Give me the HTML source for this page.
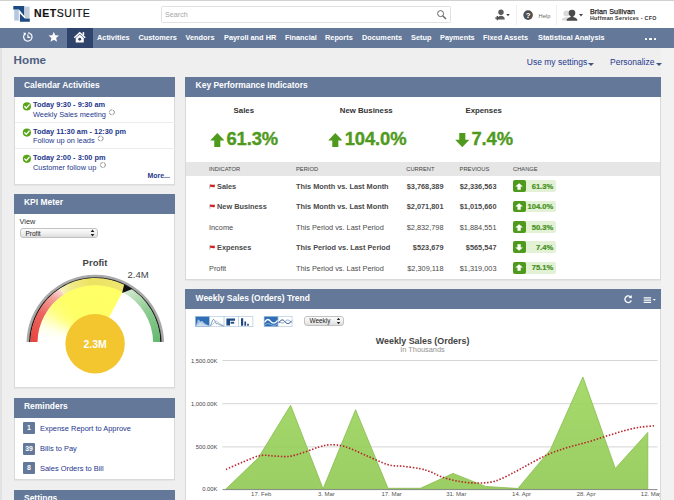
<!DOCTYPE html>
<html>
<head>
<meta charset="utf-8">
<title>Home - NetSuite</title>
<style>
*{box-sizing:border-box;margin:0;padding:0}
html,body{width:674px;height:500px;overflow:hidden}
body{background:#efefef;font-family:"Liberation Sans",Arial,sans-serif;font-size:8px;color:#333;position:relative}
.abs{position:absolute}
#top{position:absolute;left:0;top:0;width:674px;height:28px;background:#fff;border-top:1px solid #d2d2d2}
#nav{position:absolute;left:0;top:28px;width:674px;height:20px;background:#64789a}
#nav .home{position:absolute;left:67px;top:0;width:26px;height:20px;background:#2f436b}
#nav span.m{position:absolute;top:5px;color:#fff;font-weight:bold;font-size:7.35px;line-height:9px;white-space:nowrap}
#rightstrip{position:absolute;left:661px;top:48px;width:13px;height:452px;background:#f2f2f2}
#leftstrip{position:absolute;left:0;top:48px;width:1.5px;height:452px;background:#e2e2e2}
.portlet{position:absolute;background:#fff;border:1px solid #dadada;border-top:none;box-shadow:0 1px 1px rgba(0,0,0,0.04)}
.phead{position:absolute;left:-1px;top:0;right:-1px;height:19.5px;background:#64789a;color:#fff;font-weight:bold;font-size:8.45px;line-height:17.4px;padding-left:10px;white-space:nowrap}
.blue{color:#24378c}
.t{position:absolute;white-space:nowrap;line-height:10px}
.b{font-weight:bold}
.big{position:absolute;font-weight:bold;font-size:18.4px;line-height:20px;color:#4f9a1c;white-space:nowrap;letter-spacing:-0.1px;-webkit-text-stroke:0.35px #4f9a1c}
.th{position:absolute;top:165.8px;font-size:5.75px;line-height:6px;color:#444;white-space:nowrap}
.r{position:absolute;font-size:7.35px;line-height:9px;color:#4a4a4a;white-space:nowrap}
.num{text-align:right}
.chg{position:absolute;left:513px;width:42.6px;height:11.7px;background:#e3f1d6;border-radius:2px}
.chg i{position:absolute;left:0;top:0;width:13px;height:11.7px;background:#4f9a1c;border-radius:2px}
.chg b{position:absolute;right:2.4px;top:1.3px;font-size:7.6px;line-height:9px;color:#46921a;-webkit-text-stroke:0.2px #46921a}
.rem{position:absolute;left:22.8px;width:12.4px;height:12px;background:#64789a;color:#fff;font-weight:bold;font-size:6.9px;line-height:12px;text-align:center;border-radius:1px}
.reml{position:absolute;left:40px;font-size:7.45px;line-height:10px;color:#24378c;white-space:nowrap}
.sel{position:absolute;border:1px solid #c2c2c2;border-radius:3px;background:linear-gradient(#fcfcfc,#f0f0f0 50%,#dedede);font-size:6.5px;color:#222;white-space:nowrap}
</style>
</head>
<body>
<div id="top">
  <svg class="abs" style="left:13px;top:4px" width="18" height="18" viewBox="0 0 18 18">
    <rect x="1.2" y="4.6" width="4.6" height="11" fill="#b4c9e0"/>
    <rect x="12" y="1.7" width="4.6" height="11.3" fill="#c3ced9"/>
    <polygon points="0.3,1.1 11.3,1.1 11.3,11 6,4.6 0.3,4.6" fill="#1b4b82"/>
    <polygon points="6.9,8.4 11.8,13.4 16.8,13.4 16.8,16.7 6.9,16.7" fill="#1b4b82"/>
  </svg>
  <div class="t" style="left:34.4px;top:5.7px;font-size:11.5px;line-height:13px;color:#111;letter-spacing:0.6px;transform:scaleX(0.915);-webkit-text-stroke:0.2px #111;transform-origin:0 0"><b>NET</b>SUITE</div>
  <div class="abs" style="left:161px;top:4.5px;width:290px;height:17.5px;border:1px solid #e1e1e1;border-radius:1.5px;background:#fff"></div>
  <div class="t" style="left:165px;top:8.7px;font-size:7.2px;color:#a6a6a6">Search</div>
  <svg class="abs" style="left:436px;top:8px" width="12" height="12" viewBox="0 0 12 12"><circle cx="4.6" cy="4.6" r="3" fill="none" stroke="#666" stroke-width="1"/><line x1="6.9" y1="6.9" x2="10" y2="10" stroke="#666" stroke-width="1.4"/></svg>
  <div class="abs" style="left:516px;top:4px;width:1px;height:20px;background:#eeeeee"></div>
  <div class="abs" style="left:556px;top:4px;width:1px;height:20px;background:#eeeeee"></div>
  <svg class="abs" style="left:494px;top:7px" width="18" height="14" viewBox="0 0 18 14"><circle cx="7" cy="4.2" r="2.7" fill="#5a5a5a"/><path d="M3.2 11.6 C3.2 6.6 10.8 6.6 10.8 11.6 Z" fill="#5a5a5a"/><path d="M1.2 10.2 h4.2 M3.3 8.1 v4.2" stroke="#4a4a4a" stroke-width="1.3"/><path d="M12.2 6 h3.6 l-1.8 2.3z" fill="#444"/></svg>
  <svg class="abs" style="left:523.3px;top:9.2px" width="10.2" height="10.2" viewBox="0 0 11 11"><circle cx="5.5" cy="5.5" r="5.2" fill="#4f4f4f"/><text x="5.5" y="8.5" font-size="8.4" font-weight="bold" fill="#fff" text-anchor="middle" font-family="Liberation Sans, sans-serif">?</text></svg>
  <div class="t" style="left:538.6px;top:9.6px;font-size:5.7px;color:#666">Help</div>
  <svg class="abs" style="left:561px;top:7px" width="24" height="14" viewBox="0 0 24 14"><circle cx="5.4" cy="5.4" r="3" fill="#d9d9d9"/><path d="M0.6 12.6 C0.6 8.2 10 8.2 10 12.6 Z" fill="#d9d9d9"/><circle cx="11" cy="5" r="3.3" fill="#4a4a4a"/><path d="M9.6 7.4 h2.8 v2 h-2.8z" fill="#4a4a4a"/><path d="M5.6 12.7 C5.6 7.8 16.4 7.8 16.4 12.7 Z" fill="#4a4a4a"/><path d="M18 6 h4 l-2 2.4z" fill="#444"/></svg>
  <div class="t" style="left:590px;top:6.6px;font-size:7.1px;line-height:8px;color:#222;letter-spacing:0.12px;-webkit-text-stroke:0.25px #222">Brian Sullivan</div>
  <div class="t b" style="left:590px;top:14.2px;font-size:5.3px;line-height:6px;color:#333;letter-spacing:0.27px">Huffman Services - CFO</div>
</div>

<div id="nav">
  <div class="home"></div>
  <svg class="abs" style="left:21.6px;top:3.3px" width="11.8" height="11.8" viewBox="0 0 13 13"><path d="M3.2 3.2 A4.6 4.6 0 1 0 6.5 1.9" fill="none" stroke="#fff" stroke-width="1.3"/><path d="M6.5 3.6 V7 H9" fill="none" stroke="#fff" stroke-width="1.2"/><path d="M1.2 2 l3.2 0 l-0.6 3z" fill="#fff"/></svg>
  <svg class="abs" style="left:47.9px;top:3.3px" width="11.6" height="11.6" viewBox="0 0 13 13"><polygon points="6.5,0.8 8.1,4.8 12.4,5.1 9.1,7.9 10.2,12.1 6.5,9.8 2.8,12.1 3.9,7.9 0.6,5.1 4.9,4.8" fill="#fff"/></svg>
  <svg class="abs" style="left:73.1px;top:2.8px" width="13.5" height="12.5" viewBox="0 0 14 13"><path d="M7 0.8 L0.8 6.6 L1.8 7.6 L7 2.8 L12.2 7.6 L13.2 6.6 Z" fill="#fff"/><path d="M2.8 7.2 L7 3.6 L11.2 7.2 V12 H2.8 Z" fill="#fff"/><rect x="10" y="1.2" width="1.6" height="3" fill="#fff"/><circle cx="7" cy="8.6" r="1.5" fill="#2f436b"/></svg>
  <span class="m" style="left:97px">Activities</span>
  <span class="m" style="left:138.5px">Customers</span>
  <span class="m" style="left:185.5px">Vendors</span>
  <span class="m" style="left:224px">Payroll and HR</span>
  <span class="m" style="left:285px">Financial</span>
  <span class="m" style="left:325px">Reports</span>
  <span class="m" style="left:362px">Documents</span>
  <span class="m" style="left:411px">Setup</span>
  <span class="m" style="left:440px">Payments</span>
  <span class="m" style="left:483px">Fixed Assets</span>
  <span class="m" style="left:538px">Statistical Analysis</span>
  <div class="abs" style="left:644.9px;top:9.7px;width:2.3px;height:2.3px;background:#fff;border-radius:0.6px"></div>
  <div class="abs" style="left:649.4px;top:9.7px;width:2.3px;height:2.3px;background:#fff;border-radius:0.6px"></div>
  <div class="abs" style="left:653.9px;top:9.7px;width:2.3px;height:2.3px;background:#fff;border-radius:0.6px"></div>
</div>
<div id="rightstrip"></div>
<div id="leftstrip"></div>

<div class="t b" style="left:13.6px;top:51.7px;font-size:11.7px;line-height:16px;color:#4d5f80">Home</div>
<div class="t blue" style="left:526.8px;top:56.8px;font-size:8.5px;line-height:10px">Use my settings</div>
<div class="abs" style="left:588px;top:63.4px;width:0;height:0;border-left:3px solid transparent;border-right:3px solid transparent;border-top:3px solid #44557f"></div>
<div class="t blue" style="left:610px;top:56.8px;font-size:8.5px;line-height:10px">Personalize</div>
<div class="abs" style="left:655.5px;top:63.4px;width:0;height:0;border-left:3px solid transparent;border-right:3px solid transparent;border-top:3px solid #44557f"></div>

<!-- Calendar Activities -->
<div class="portlet" style="left:14px;top:77px;width:161.4px;height:107.5px">
  <div class="phead">Calendar Activities</div>
  <div class="abs" style="left:0;top:45px;width:160px;height:1px;background:#ececec"></div>
  <div class="abs" style="left:0;top:71px;width:160px;height:1px;background:#ececec"></div>
</div>
<svg class="abs" style="left:0;top:0" width="190" height="200" viewBox="0 0 190 200">
  <g id="chk"><circle cx="26.9" cy="106.4" r="4.1" fill="#58a618"/><path d="M24.7 106.5 l1.6 1.7 l2.9 -3.4" fill="none" stroke="#fff" stroke-width="1.3" stroke-linecap="round" stroke-linejoin="round"/></g>
  <g transform="translate(0,26.2)"><circle cx="26.9" cy="106.4" r="4.1" fill="#58a618"/><path d="M24.7 106.5 l1.6 1.7 l2.9 -3.4" fill="none" stroke="#fff" stroke-width="1.3" stroke-linecap="round" stroke-linejoin="round"/></g>
  <g transform="translate(0,52.4)"><circle cx="26.9" cy="106.4" r="4.1" fill="#58a618"/><path d="M24.7 106.5 l1.6 1.7 l2.9 -3.4" fill="none" stroke="#fff" stroke-width="1.3" stroke-linecap="round" stroke-linejoin="round"/></g>
  <circle cx="111.9" cy="112.3" r="2.5" fill="none" stroke="#8a8a8a" stroke-width="0.95" stroke-dasharray="3.2 0.9"/>
  <circle cx="100.6" cy="138.5" r="2.5" fill="none" stroke="#8a8a8a" stroke-width="0.95" stroke-dasharray="3.2 0.9"/>
  <circle cx="102.9" cy="165" r="2.5" fill="none" stroke="#8a8a8a" stroke-width="0.95" stroke-dasharray="3.2 0.9"/>
</svg>
<div class="t b blue" style="left:33px;top:100.2px;font-size:7.4px">Today 9:30 - 9:30 am</div>
<div class="t blue" style="left:33px;top:109.8px;font-size:7.4px">Weekly Sales meeting</div>
<div class="t b blue" style="left:33px;top:126.6px;font-size:7.4px">Today 11:30 am - 12:30 pm</div>
<div class="t blue" style="left:33px;top:136.4px;font-size:7.4px">Follow up on leads</div>
<div class="t b blue" style="left:33px;top:152.8px;font-size:7.4px">Today 2:00 - 3:00 pm</div>
<div class="t blue" style="left:33px;top:162.5px;font-size:7.4px">Customer follow up</div>
<div class="t b blue" style="left:147.5px;top:170.8px;font-size:6.95px">More...</div>


<!-- KPI Meter -->
<div class="portlet" style="left:14px;top:194px;width:161.4px;height:193.5px">
  <div class="phead">KPI Meter</div>
</div>
<div class="t" style="left:19.5px;top:217.3px;font-size:7.4px;color:#333">View</div>
<div class="sel" style="left:19.5px;top:227.5px;width:78.5px;height:10.5px;line-height:9px;padding-left:5px">Profit</div>
<svg class="abs" style="left:89.5px;top:229px" width="5" height="8" viewBox="0 0 5 8"><path d="M0.6 3 L2.5 0.6 L4.4 3Z M0.6 5 L2.5 7.4 L4.4 5Z" fill="#222"/></svg>
<svg class="abs" style="left:0;top:0" width="190" height="400" viewBox="0 0 190 400">
<defs>
<clipPath id="gc"><rect x="0" y="250" width="190" height="92"/></clipPath>
<linearGradient id="gr" gradientUnits="userSpaceOnUse" x1="32" y1="342" x2="60" y2="290"><stop offset="0" stop-color="#e8453f"/><stop offset="0.5" stop-color="#ec655f"/><stop offset="0.8" stop-color="#f29d96"/><stop offset="1" stop-color="#f9dcd4"/></linearGradient>
<linearGradient id="gy" gradientUnits="userSpaceOnUse" x1="58" y1="296" x2="125" y2="288"><stop offset="0" stop-color="#f8f4cc"/><stop offset="0.22" stop-color="#f1ea88"/><stop offset="0.5" stop-color="#ece362"/><stop offset="1" stop-color="#efe670"/></linearGradient>
<linearGradient id="gg" gradientUnits="userSpaceOnUse" x1="128" y1="290" x2="160" y2="342"><stop offset="0" stop-color="#d2e9ce"/><stop offset="0.45" stop-color="#8fcc92"/><stop offset="1" stop-color="#62b86c"/></linearGradient>
</defs>
<g clip-path="url(#gc)">
<path d="M26.50 343.60 A68.8 68.8 0 1 1 164.10 343.60 L161.30 343.58 A66 66 0 1 0 29.30 343.58 Z" fill="#a9a9a9"/>
<path d="M29.00 343.58 A66.3 66.3 0 1 1 161.60 343.58 L160.10 343.57 A64.8 64.8 0 1 0 30.50 343.57 Z" fill="#1c1c1c"/>
<path d="M95.3 343.0 L37.20 343.51 A58.099999999999994 58.099999999999994 0 0 1 37.28 339.96 Z" fill="#ffffff"/>
<path d="M95.3 343.0 L37.22 341.48 A58.099999999999994 58.099999999999994 0 0 1 37.42 337.94 Z" fill="#fffffe"/>
<path d="M95.3 343.0 L37.31 339.45 A58.099999999999994 58.099999999999994 0 0 1 37.63 335.92 Z" fill="#fffffd"/>
<path d="M95.3 343.0 L37.47 337.43 A58.099999999999994 58.099999999999994 0 0 1 37.92 333.91 Z" fill="#fffffd"/>
<path d="M95.3 343.0 L37.70 335.42 A58.099999999999994 58.099999999999994 0 0 1 38.27 331.91 Z" fill="#fffffb"/>
<path d="M95.3 343.0 L38.00 333.41 A58.099999999999994 58.099999999999994 0 0 1 38.69 329.93 Z" fill="#fffff6"/>
<path d="M95.3 343.0 L38.37 331.42 A58.099999999999994 58.099999999999994 0 0 1 39.18 327.96 Z" fill="#fffff2"/>
<path d="M95.3 343.0 L38.81 329.44 A58.099999999999994 58.099999999999994 0 0 1 39.74 326.01 Z" fill="#ffffee"/>
<path d="M95.3 343.0 L39.31 327.47 A58.099999999999994 58.099999999999994 0 0 1 40.37 324.08 Z" fill="#ffffe9"/>
<path d="M95.3 343.0 L39.89 325.53 A58.099999999999994 58.099999999999994 0 0 1 41.06 322.18 Z" fill="#ffffe1"/>
<path d="M95.3 343.0 L40.53 323.61 A58.099999999999994 58.099999999999994 0 0 1 41.82 320.30 Z" fill="#ffffd8"/>
<path d="M95.3 343.0 L41.24 321.71 A58.099999999999994 58.099999999999994 0 0 1 42.64 318.45 Z" fill="#ffffcf"/>
<path d="M95.3 343.0 L42.02 319.83 A58.099999999999994 58.099999999999994 0 0 1 43.53 316.62 Z" fill="#ffffc6"/>
<path d="M95.3 343.0 L42.86 317.99 A58.099999999999994 58.099999999999994 0 0 1 44.48 314.83 Z" fill="#ffffbb"/>
<path d="M95.3 343.0 L43.76 316.17 A58.099999999999994 58.099999999999994 0 0 1 45.50 313.08 Z" fill="#ffffb0"/>
<path d="M95.3 343.0 L44.73 314.39 A58.099999999999994 58.099999999999994 0 0 1 46.57 311.36 Z" fill="#ffffa4"/>
<path d="M95.3 343.0 L45.76 312.64 A58.099999999999994 58.099999999999994 0 0 1 47.71 309.68 Z" fill="#ffff99"/>
<path d="M95.3 343.0 L46.85 310.93 A58.099999999999994 58.099999999999994 0 0 1 48.90 308.03 Z" fill="#ffff91"/>
<path d="M95.3 343.0 L48.00 309.26 A58.099999999999994 58.099999999999994 0 0 1 50.15 306.44 Z" fill="#ffff8a"/>
<path d="M95.3 343.0 L49.21 307.63 A58.099999999999994 58.099999999999994 0 0 1 51.45 304.88 Z" fill="#ffff82"/>
<path d="M95.3 343.0 L50.47 306.04 A58.099999999999994 58.099999999999994 0 0 1 52.81 303.38 Z" fill="#ffff7b"/>
<path d="M95.3 343.0 L51.79 304.50 A58.099999999999994 58.099999999999994 0 0 1 54.22 301.92 Z" fill="#ffff75"/>
<path d="M95.3 343.0 L53.16 303.01 A58.099999999999994 58.099999999999994 0 0 1 55.68 300.51 Z" fill="#ffff73"/>
<path d="M95.3 343.0 L54.58 301.56 A58.099999999999994 58.099999999999994 0 0 1 57.18 299.15 Z" fill="#ffff70"/>
<path d="M95.3 343.0 L56.05 300.16 A58.099999999999994 58.099999999999994 0 0 1 58.74 297.85 Z" fill="#ffff6e"/>
<path d="M95.3 343.0 L57.57 298.82 A58.099999999999994 58.099999999999994 0 0 1 60.33 296.60 Z" fill="#ffff6c"/>
<path d="M95.3 343.0 L59.13 297.53 A58.099999999999994 58.099999999999994 0 0 1 61.98 295.41 Z" fill="#ffff69"/>
<path d="M95.3 343.0 L60.74 296.30 A58.099999999999994 58.099999999999994 0 0 1 63.66 294.27 Z" fill="#ffff67"/>
<path d="M95.3 343.0 L62.39 295.12 A58.099999999999994 58.099999999999994 0 0 1 65.38 293.20 Z" fill="#ffff66"/>
<path d="M95.3 343.0 L64.08 294.00 A58.099999999999994 58.099999999999994 0 0 1 67.13 292.18 Z" fill="#ffff66"/>
<path d="M95.3 343.0 L65.81 292.94 A58.099999999999994 58.099999999999994 0 0 1 68.92 291.23 Z" fill="#ffff66"/>
<path d="M95.3 343.0 L67.58 291.94 A58.099999999999994 58.099999999999994 0 0 1 70.75 290.34 Z" fill="#ffff66"/>
<path d="M95.3 343.0 L69.38 291.00 A58.099999999999994 58.099999999999994 0 0 1 72.60 289.52 Z" fill="#ffff66"/>
<path d="M95.3 343.0 L71.21 290.13 A58.099999999999994 58.099999999999994 0 0 1 74.48 288.76 Z" fill="#ffff66"/>
<path d="M95.3 343.0 L73.07 289.32 A58.099999999999994 58.099999999999994 0 0 1 76.38 288.07 Z" fill="#ffff66"/>
<path d="M95.3 343.0 L74.95 288.58 A58.099999999999994 58.099999999999994 0 0 1 78.31 287.44 Z" fill="#ffff66"/>
<path d="M95.3 343.0 L76.86 287.90 A58.099999999999994 58.099999999999994 0 0 1 80.26 286.88 Z" fill="#ffff66"/>
<path d="M95.3 343.0 L78.80 287.29 A58.099999999999994 58.099999999999994 0 0 1 82.23 286.39 Z" fill="#ffff66"/>
<path d="M95.3 343.0 L80.75 286.75 A58.099999999999994 58.099999999999994 0 0 1 84.21 285.97 Z" fill="#ffff66"/>
<path d="M95.3 343.0 L82.72 286.28 A58.099999999999994 58.099999999999994 0 0 1 86.21 285.62 Z" fill="#ffff66"/>
<path d="M95.3 343.0 L84.71 285.87 A58.099999999999994 58.099999999999994 0 0 1 88.22 285.33 Z" fill="#ffff66"/>
<path d="M95.3 343.0 L86.71 285.54 A58.099999999999994 58.099999999999994 0 0 1 90.24 285.12 Z" fill="#ffff66"/>
<path d="M95.3 343.0 L88.72 285.27 A58.099999999999994 58.099999999999994 0 0 1 92.26 284.98 Z" fill="#ffff66"/>
<path d="M95.3 343.0 L90.74 285.08 A58.099999999999994 58.099999999999994 0 0 1 94.29 284.91 Z" fill="#ffff66"/>
<path d="M95.3 343.0 L92.77 284.96 A58.099999999999994 58.099999999999994 0 0 1 96.31 284.91 Z" fill="#ffff66"/>
<path d="M95.3 343.0 L94.79 284.90 A58.099999999999994 58.099999999999994 0 0 1 98.34 284.98 Z" fill="#ffff66"/>
<path d="M95.3 343.0 L96.82 284.92 A58.099999999999994 58.099999999999994 0 0 1 100.36 285.12 Z" fill="#ffff66"/>
<path d="M95.3 343.0 L98.85 285.01 A58.099999999999994 58.099999999999994 0 0 1 102.38 285.33 Z" fill="#ffff66"/>
<path d="M95.3 343.0 L100.87 285.17 A58.099999999999994 58.099999999999994 0 0 1 104.39 285.62 Z" fill="#ffff66"/>
<path d="M95.3 343.0 L102.88 285.40 A58.099999999999994 58.099999999999994 0 0 1 106.39 285.97 Z" fill="#ffff66"/>
<path d="M95.3 343.0 L104.89 285.70 A58.099999999999994 58.099999999999994 0 0 1 108.37 286.39 Z" fill="#ffff66"/>
<path d="M95.3 343.0 L106.88 286.07 A58.099999999999994 58.099999999999994 0 0 1 110.34 286.88 Z" fill="#ffff66"/>
<path d="M95.3 343.0 L108.86 286.51 A58.099999999999994 58.099999999999994 0 0 1 112.29 287.44 Z" fill="#ffff66"/>
<path d="M95.3 343.0 L110.83 287.01 A58.099999999999994 58.099999999999994 0 0 1 114.22 288.07 Z" fill="#ffff66"/>
<path d="M95.3 343.0 L112.77 287.59 A58.099999999999994 58.099999999999994 0 0 1 116.12 288.76 Z" fill="#ffff66"/>
<path d="M95.3 343.0 L114.69 288.23 A58.099999999999994 58.099999999999994 0 0 1 118.00 289.52 Z" fill="#ffff66"/>
<path d="M95.3 343.0 L116.59 288.94 A58.099999999999994 58.099999999999994 0 0 1 119.85 290.34 Z" fill="#ffff66"/>
<path d="M95.3 343.0 L118.47 289.72 A58.099999999999994 58.099999999999994 0 0 1 121.68 291.23 Z" fill="#ffff66"/>
<path d="M95.3 343.0 L120.31 290.56 A58.099999999999994 58.099999999999994 0 0 1 122.58 291.70 Z" fill="#ffff66"/>
<path d="M95.3 343.0 L122.13 291.46 A58.099999999999994 58.099999999999994 0 0 1 122.58 291.70 Z" fill="#ffff66"/>
<path d="M30.30 343.57 A65.0 65.0 0 0 1 59.90 288.49 L63.82 294.52 A57.8 57.8 0 0 0 37.50 343.50 Z" fill="url(#gr)"/>
<path d="M59.90 288.49 A65.0 65.0 0 0 1 125.82 285.61 L122.44 291.97 A57.8 57.8 0 0 0 63.82 294.52 Z" fill="url(#gy)"/>
<path d="M125.82 285.61 A65.0 65.0 0 0 1 160.30 343.57 L153.10 343.50 A57.8 57.8 0 0 0 122.44 291.97 Z" fill="url(#gg)"/>
<path d="M122.14 292.94 L124.22 284.23 L132.40 289.02 Z" fill="#111"/>
</g>
<circle cx="95.1" cy="343.7" r="29.7" fill="#f3c62f"/>
<text x="95.1" y="347.6" text-anchor="middle" font-family="Liberation Sans, sans-serif" font-weight="bold" font-size="10.5" fill="#fff">2.3M</text>
<text x="95" y="265.6" text-anchor="middle" font-family="Liberation Sans, sans-serif" font-weight="bold" font-size="9.5" fill="#444">Profit</text>
<text x="127.5" y="278.4" font-family="Liberation Sans, sans-serif" font-size="9.5" fill="#444">2.4M</text>
</svg>

<!-- Reminders -->
<div class="portlet" style="left:14px;top:398px;width:161.4px;height:81.5px">
  <div class="phead">Reminders</div>
</div>
<div class="rem" style="top:422.4px">1</div><div class="reml" style="top:424.1px">Expense Report to Approve</div>
<div class="rem" style="top:442.6px">39</div><div class="reml" style="top:444.2px">Bills to Pay</div>
<div class="rem" style="top:462.4px">8</div><div class="reml" style="top:463.7px">Sales Orders to Bill</div>

<!-- Settings -->
<div class="portlet" style="left:14px;top:489.5px;width:161.4px;height:30px">
  <div class="phead">Settings</div>
</div>

<!-- KPI -->
<div class="portlet" style="left:185px;top:77px;width:475.6px;height:203px">
  <div class="phead" style="padding-left:10.6px">Key Performance Indicators</div>
  <div class="abs" style="left:0;top:84.5px;width:473.5px;height:14.4px;background:#e6e6e6"></div>
</div>
<div class="t b" style="left:213.8px;top:105.6px;width:60px;text-align:center;font-size:7.8px;color:#333">Sales</div>
<div class="t b" style="left:326.2px;top:105.6px;width:80px;text-align:center;font-size:7.8px;color:#333">New Business</div>
<div class="t b" style="left:453.7px;top:105.6px;width:60px;text-align:center;font-size:7.8px;color:#333">Expenses</div>
<svg class="abs" style="left:209.7px;top:133px" width="14.6" height="14.2" viewBox="0 0 14 14"><path d="M7 0 L14 7.4 H10 V14 H4 V7.4 H0 Z" fill="#4f9a1c"/></svg>
<div class="big" style="left:226.4px;top:128.8px">61.3%</div>
<svg class="abs" style="left:327.6px;top:133px" width="14.6" height="14.2" viewBox="0 0 14 14"><path d="M7 0 L14 7.4 H10 V14 H4 V7.4 H0 Z" fill="#4f9a1c"/></svg>
<div class="big" style="left:344.7px;top:128.8px">104.0%</div>
<svg class="abs" style="left:455px;top:133px" width="14.6" height="14.2" viewBox="0 0 14 14"><path d="M7 14 L14 6.6 H10 V0 H4 V6.6 H0 Z" fill="#4f9a1c"/></svg>
<div class="big" style="left:471.4px;top:128.8px">7.4%</div>
<div class="th" style="left:209px">INDICATOR</div>
<div class="th" style="left:296px">PERIOD</div>
<div class="th" style="left:406.3px">CURRENT</div>
<div class="th" style="left:459.6px">PREVIOUS</div>
<div class="th" style="left:513px">CHANGE</div>
<svg class="abs" style="left:209.4px;top:183.6px" width="6" height="5" viewBox="0 0 6.6 5.5"><path d="M0.9 0.6 V5.2" stroke="#9a8f8f" stroke-width="0.8"/><path d="M1.2 0.6 C2.6 0 4 1.4 6.4 0.6 V3.3 C4 4.1 2.6 2.7 1.2 3.3 Z" fill="#cf1f27"/></svg>
<div class="r b" style="left:217px;top:181.9px">Sales</div>
<div class="r b" style="left:296px;top:181.9px">This Month vs. Last Month</div>
<div class="r b num" style="left:383.5px;width:60px;top:181.9px">$3,768,389</div>
<div class="r b num" style="left:436.5px;width:60px;top:181.9px">$2,336,563</div>
<div class="chg" style="top:180.3px"><i><svg class="abs" style="left:2.4px;top:2.3px" width="8.2" height="7" viewBox="0 0 7 7" preserveAspectRatio="none"><path d="M3.5 0.3 L6.8 3.6 H4.9 V6.8 H2.1 V3.6 H0.2 Z" fill="#fff"/></svg></i><b>61.3%</b></div>
<svg class="abs" style="left:209.4px;top:203.79999999999998px" width="6" height="5" viewBox="0 0 6.6 5.5"><path d="M0.9 0.6 V5.2" stroke="#9a8f8f" stroke-width="0.8"/><path d="M1.2 0.6 C2.6 0 4 1.4 6.4 0.6 V3.3 C4 4.1 2.6 2.7 1.2 3.3 Z" fill="#cf1f27"/></svg>
<div class="r b" style="left:217px;top:202.1px">New Business</div>
<div class="r b" style="left:296px;top:202.1px">This Month vs. Last Month</div>
<div class="r b num" style="left:383.5px;width:60px;top:202.1px">$2,071,801</div>
<div class="r b num" style="left:436.5px;width:60px;top:202.1px">$1,015,660</div>
<div class="chg" style="top:200.5px"><i><svg class="abs" style="left:2.4px;top:2.3px" width="8.2" height="7" viewBox="0 0 7 7" preserveAspectRatio="none"><path d="M3.5 0.3 L6.8 3.6 H4.9 V6.8 H2.1 V3.6 H0.2 Z" fill="#fff"/></svg></i><b>104.0%</b></div>
<div class="r" style="left:209px;top:222.9px">Income</div>
<div class="r" style="left:296px;top:222.9px">This Period vs. Last Period</div>
<div class="r num" style="left:383.5px;width:60px;top:222.9px">$2,832,798</div>
<div class="r num" style="left:436.5px;width:60px;top:222.9px">$1,884,551</div>
<div class="chg" style="top:221.3px"><i><svg class="abs" style="left:2.4px;top:2.3px" width="8.2" height="7" viewBox="0 0 7 7" preserveAspectRatio="none"><path d="M3.5 0.3 L6.8 3.6 H4.9 V6.8 H2.1 V3.6 H0.2 Z" fill="#fff"/></svg></i><b>50.3%</b></div>
<svg class="abs" style="left:209.4px;top:244.7px" width="6" height="5" viewBox="0 0 6.6 5.5"><path d="M0.9 0.6 V5.2" stroke="#9a8f8f" stroke-width="0.8"/><path d="M1.2 0.6 C2.6 0 4 1.4 6.4 0.6 V3.3 C4 4.1 2.6 2.7 1.2 3.3 Z" fill="#cf1f27"/></svg>
<div class="r b" style="left:217px;top:243.0px">Expenses</div>
<div class="r b" style="left:296px;top:243.0px">This Period vs. Last Period</div>
<div class="r b num" style="left:383.5px;width:60px;top:243.0px">$523,679</div>
<div class="r b num" style="left:436.5px;width:60px;top:243.0px">$565,547</div>
<div class="chg" style="top:241.4px"><i><svg class="abs" style="left:2.4px;top:2.3px" width="8.2" height="7" viewBox="0 0 7 7" preserveAspectRatio="none"><path d="M3.5 6.7 L6.8 3.4 H4.9 V0.2 H2.1 V3.4 H0.2 Z" fill="#fff"/></svg></i><b>7.4%</b></div>
<div class="r" style="left:209px;top:263.6px">Profit</div>
<div class="r" style="left:296px;top:263.6px">This Period vs. Last Period</div>
<div class="r num" style="left:383.5px;width:60px;top:263.6px">$2,309,118</div>
<div class="r num" style="left:436.5px;width:60px;top:263.6px">$1,319,003</div>
<div class="chg" style="top:262.0px"><i><svg class="abs" style="left:2.4px;top:2.3px" width="8.2" height="7" viewBox="0 0 7 7" preserveAspectRatio="none"><path d="M3.5 0.3 L6.8 3.6 H4.9 V6.8 H2.1 V3.6 H0.2 Z" fill="#fff"/></svg></i><b>75.1%</b></div>

<!-- Trend -->
<div class="portlet" style="left:185px;top:289px;width:475.6px;height:230px">
  <div class="phead" style="padding-left:10.6px;line-height:18.2px">Weekly Sales (Orders) Trend</div>
</div>
<svg class="abs" style="left:641px;top:293.5px" width="20" height="11" viewBox="0 0 20 11"><path d="M2.7 3.9h7.4M2.7 6.1h7.4M2.7 8.3h7.4" stroke="#fff" stroke-width="1.2"/><path d="M11.8 5h3l-1.5 1.8z" fill="#fff"/></svg>
<svg class="abs" style="left:623.2px;top:294.2px" width="10" height="11" viewBox="0 0 10 11"><path d="M7.9 3.3 A3.3 3.3 0 1 0 8.3 6.4" fill="none" stroke="#fff" stroke-width="1.3"/><path d="M5.6 3.9 L8.8 4.2 L8.7 0.9Z" fill="#fff"/></svg>
<svg class="abs" style="left:194.7px;top:315.7px" width="100" height="12" viewBox="0 0 100 12">
  <rect x="0.3" y="0.3" width="14.4" height="10.4" fill="#2f6db5" stroke="#a9c3df" stroke-width="0.6"/><path d="M0.8 10.2 L2.6 4.6 C3.4 2.4 4.4 3.4 5.4 6.2 L6.4 8 C7.4 7 8.4 8.6 9.8 9 L14.2 10.2Z" fill="#9dbfe4"/><path d="M0.8 10.2 L3.4 8 C5 6.6 6 4.4 7.2 5.2 S10 8.4 14.2 9.4 V10.2Z" fill="#dbe8f6" opacity="0.75"/>
  <rect x="14.7" y="0.3" width="14.4" height="10.4" fill="#fff" stroke="#a9c3df" stroke-width="0.6"/><path d="M15.4 10 L17.6 4.4 C18.4 2.6 19.4 3.6 20.4 6 L21.4 7.8 C22.4 6.8 23.4 8.4 24.8 8.8 L28.6 10" fill="none" stroke="#4a6f9e" stroke-width="0.7"/><path d="M15.4 10 L18.2 7.8 C19.8 6.4 20.8 4.6 22 5.4 S24.8 8.4 28.6 9.4" fill="none" stroke="#9ab4d2" stroke-width="0.7"/>
  <rect x="29.1" y="0.3" width="14.4" height="10.4" fill="#fff" stroke="#a9c3df" stroke-width="0.6"/><path d="M31.4 9.6 V2.6 H40 V4.8 H35 V9.6Z" fill="#1f4a86"/><rect x="35.6" y="5.8" width="3.6" height="1.9" fill="#1f4a86"/>
  <rect x="43.5" y="0.3" width="14.4" height="10.4" fill="#fff" stroke="#a9c3df" stroke-width="0.6"/><path d="M46 9.8V2.2h2.2v7.6z M49.4 9.8V5.6h1.7v4.2z M52.2 9.8V7.8h1.6v2z" fill="#1f4a86"/>
  <rect x="69.1" y="0.3" width="14" height="10.4" fill="#2f6db5" stroke="#a9c3df" stroke-width="0.6"/><path d="M69.6 6.4 C71.6 2.6 73.6 2.8 75.6 5.4 S80.4 7.6 82.6 4.4" fill="none" stroke="#fff" stroke-width="1.3"/><path d="M69.6 9.2 C72 7 74 7.4 76 8.6 S80.4 9.6 82.6 8" fill="none" stroke="#b8d2ee" stroke-width="0.7"/>
  <rect x="83.1" y="0.3" width="14" height="10.4" fill="#fff" stroke="#a9c3df" stroke-width="0.6"/><path d="M83.8 7 C86 3 88 3.2 90 5.8 S94.4 8 96.6 4.8" fill="none" stroke="#1f4a86" stroke-width="1"/><path d="M83.8 5 C86 7.6 88.4 7.6 90.4 5.2 S94.4 4.4 96.6 6.6" fill="none" stroke="#5c7fad" stroke-width="0.7"/>
</svg>
<div class="sel" style="left:304px;top:316px;width:39.5px;height:10px;line-height:8.6px;padding-left:4.6px;font-size:6.4px">Weekly</div>
<svg class="abs" style="left:336.4px;top:317.2px" width="5" height="8" viewBox="0 0 5 8"><path d="M0.8 3 L2.5 0.8 L4.2 3Z M0.8 5 L2.5 7.2 L4.2 5Z" fill="#222"/></svg>

<svg class="abs" style="left:0;top:0" width="660.4" height="500" viewBox="0 0 660.4 500">
<defs><linearGradient id="ga" x1="0" y1="0" x2="0" y2="1"><stop offset="0" stop-color="#9cd65c"/><stop offset="1" stop-color="#90c953"/></linearGradient></defs>
<line x1="222.5" y1="360.5" x2="657.5" y2="360.5" stroke="#d4d4d4" stroke-width="1"/>
<line x1="222.5" y1="403.7" x2="657.5" y2="403.7" stroke="#d4d4d4" stroke-width="1"/>
<line x1="222.5" y1="446.9" x2="657.5" y2="446.9" stroke="#d4d4d4" stroke-width="1"/>
<polygon points="225.7,489.4 225.7,489.2 258.2,458.0 290.6,405.3 323.1,488.8 355.6,409.7 388.0,488.3 420.5,488.3 453.0,473.4 485.5,486.4 517.9,488.5 550.4,449.7 582.9,377.0 615.3,468.5 647.8,432.5 647.8,489.4" fill="url(#ga)" fill-opacity="0.9" stroke="#86bd4b" stroke-width="0.8" stroke-linejoin="round"/>
<line x1="222.5" y1="489.6" x2="657.5" y2="489.6" stroke="#8a8a8a" stroke-width="1"/>
<path d="M226.0 469.4 C228.8 468.2 237.3 464.3 243.0 462.0 C248.7 459.7 254.8 456.6 260.0 455.6 C265.2 454.6 269.2 455.9 274.0 456.0 C278.8 456.1 283.8 457.1 289.0 456.4 C294.2 455.7 300.0 453.6 305.0 452.0 C310.0 450.4 314.8 448.2 319.0 447.0 C323.2 445.8 325.7 444.9 330.0 444.8 C334.3 444.7 339.2 444.9 345.0 446.6 C350.8 448.3 357.9 452.0 365.0 455.0 C372.1 458.0 381.4 462.7 387.7 464.6 C394.0 466.5 397.6 465.6 403.0 466.3 C408.4 467.0 415.5 467.7 420.0 468.6 C424.5 469.5 426.5 470.3 430.0 471.6 C433.5 472.9 436.4 475.0 441.0 476.6 C445.6 478.2 451.8 480.1 457.7 481.2 C463.6 482.3 470.2 483.0 476.5 483.0 C482.8 483.0 488.9 482.9 495.4 481.0 C501.9 479.1 509.6 474.6 515.5 471.6 C521.4 468.6 525.8 465.8 531.0 463.1 C536.2 460.4 541.3 457.5 546.5 455.2 C551.7 452.9 556.9 450.9 562.0 449.2 C567.1 447.5 572.2 446.2 577.4 444.8 C582.5 443.4 587.7 442.1 592.9 440.5 C598.1 438.9 603.2 437.1 608.4 435.5 C613.6 433.9 618.7 432.2 623.9 430.8 C629.1 429.4 634.4 428.1 639.4 427.3 C644.4 426.5 651.6 426.1 654.0 425.8" fill="none" stroke="#b8252c" stroke-width="1.6" stroke-dasharray="1.5 1.7"/>
<text x="217.3" y="362.6" text-anchor="end" font-family="Liberation Sans, sans-serif" font-size="5.8" fill="#444">1,500.00K</text>
<text x="217.3" y="405.8" text-anchor="end" font-family="Liberation Sans, sans-serif" font-size="5.8" fill="#444">1,000.00K</text>
<text x="217.3" y="449.0" text-anchor="end" font-family="Liberation Sans, sans-serif" font-size="5.8" fill="#444">500.00K</text>
<text x="217.3" y="491.5" text-anchor="end" font-family="Liberation Sans, sans-serif" font-size="5.8" fill="#444">0.00K</text>
<text x="261.2" y="496.1" text-anchor="middle" font-family="Liberation Sans, sans-serif" font-size="6" fill="#555">17. Feb</text>
<text x="326.4" y="496.1" text-anchor="middle" font-family="Liberation Sans, sans-serif" font-size="6" fill="#555">3. Mar</text>
<text x="391.6" y="496.1" text-anchor="middle" font-family="Liberation Sans, sans-serif" font-size="6" fill="#555">17. Mar</text>
<text x="456.3" y="496.1" text-anchor="middle" font-family="Liberation Sans, sans-serif" font-size="6" fill="#555">31. Mar</text>
<text x="521.6" y="496.1" text-anchor="middle" font-family="Liberation Sans, sans-serif" font-size="6" fill="#555">14. Apr</text>
<text x="586.2" y="496.1" text-anchor="middle" font-family="Liberation Sans, sans-serif" font-size="6" fill="#555">28. Apr</text>
<text x="651.5" y="496.1" text-anchor="middle" font-family="Liberation Sans, sans-serif" font-size="6" fill="#555">12. May</text>
<text x="422.6" y="344" text-anchor="middle" font-family="Liberation Sans, sans-serif" font-weight="bold" font-size="8.9" fill="#444">Weekly Sales (Orders)</text>
<text x="422.5" y="351.9" text-anchor="middle" font-family="Liberation Sans, sans-serif" font-size="7.4" fill="#929292">In Thousands</text>
</svg>

</body>
</html>
